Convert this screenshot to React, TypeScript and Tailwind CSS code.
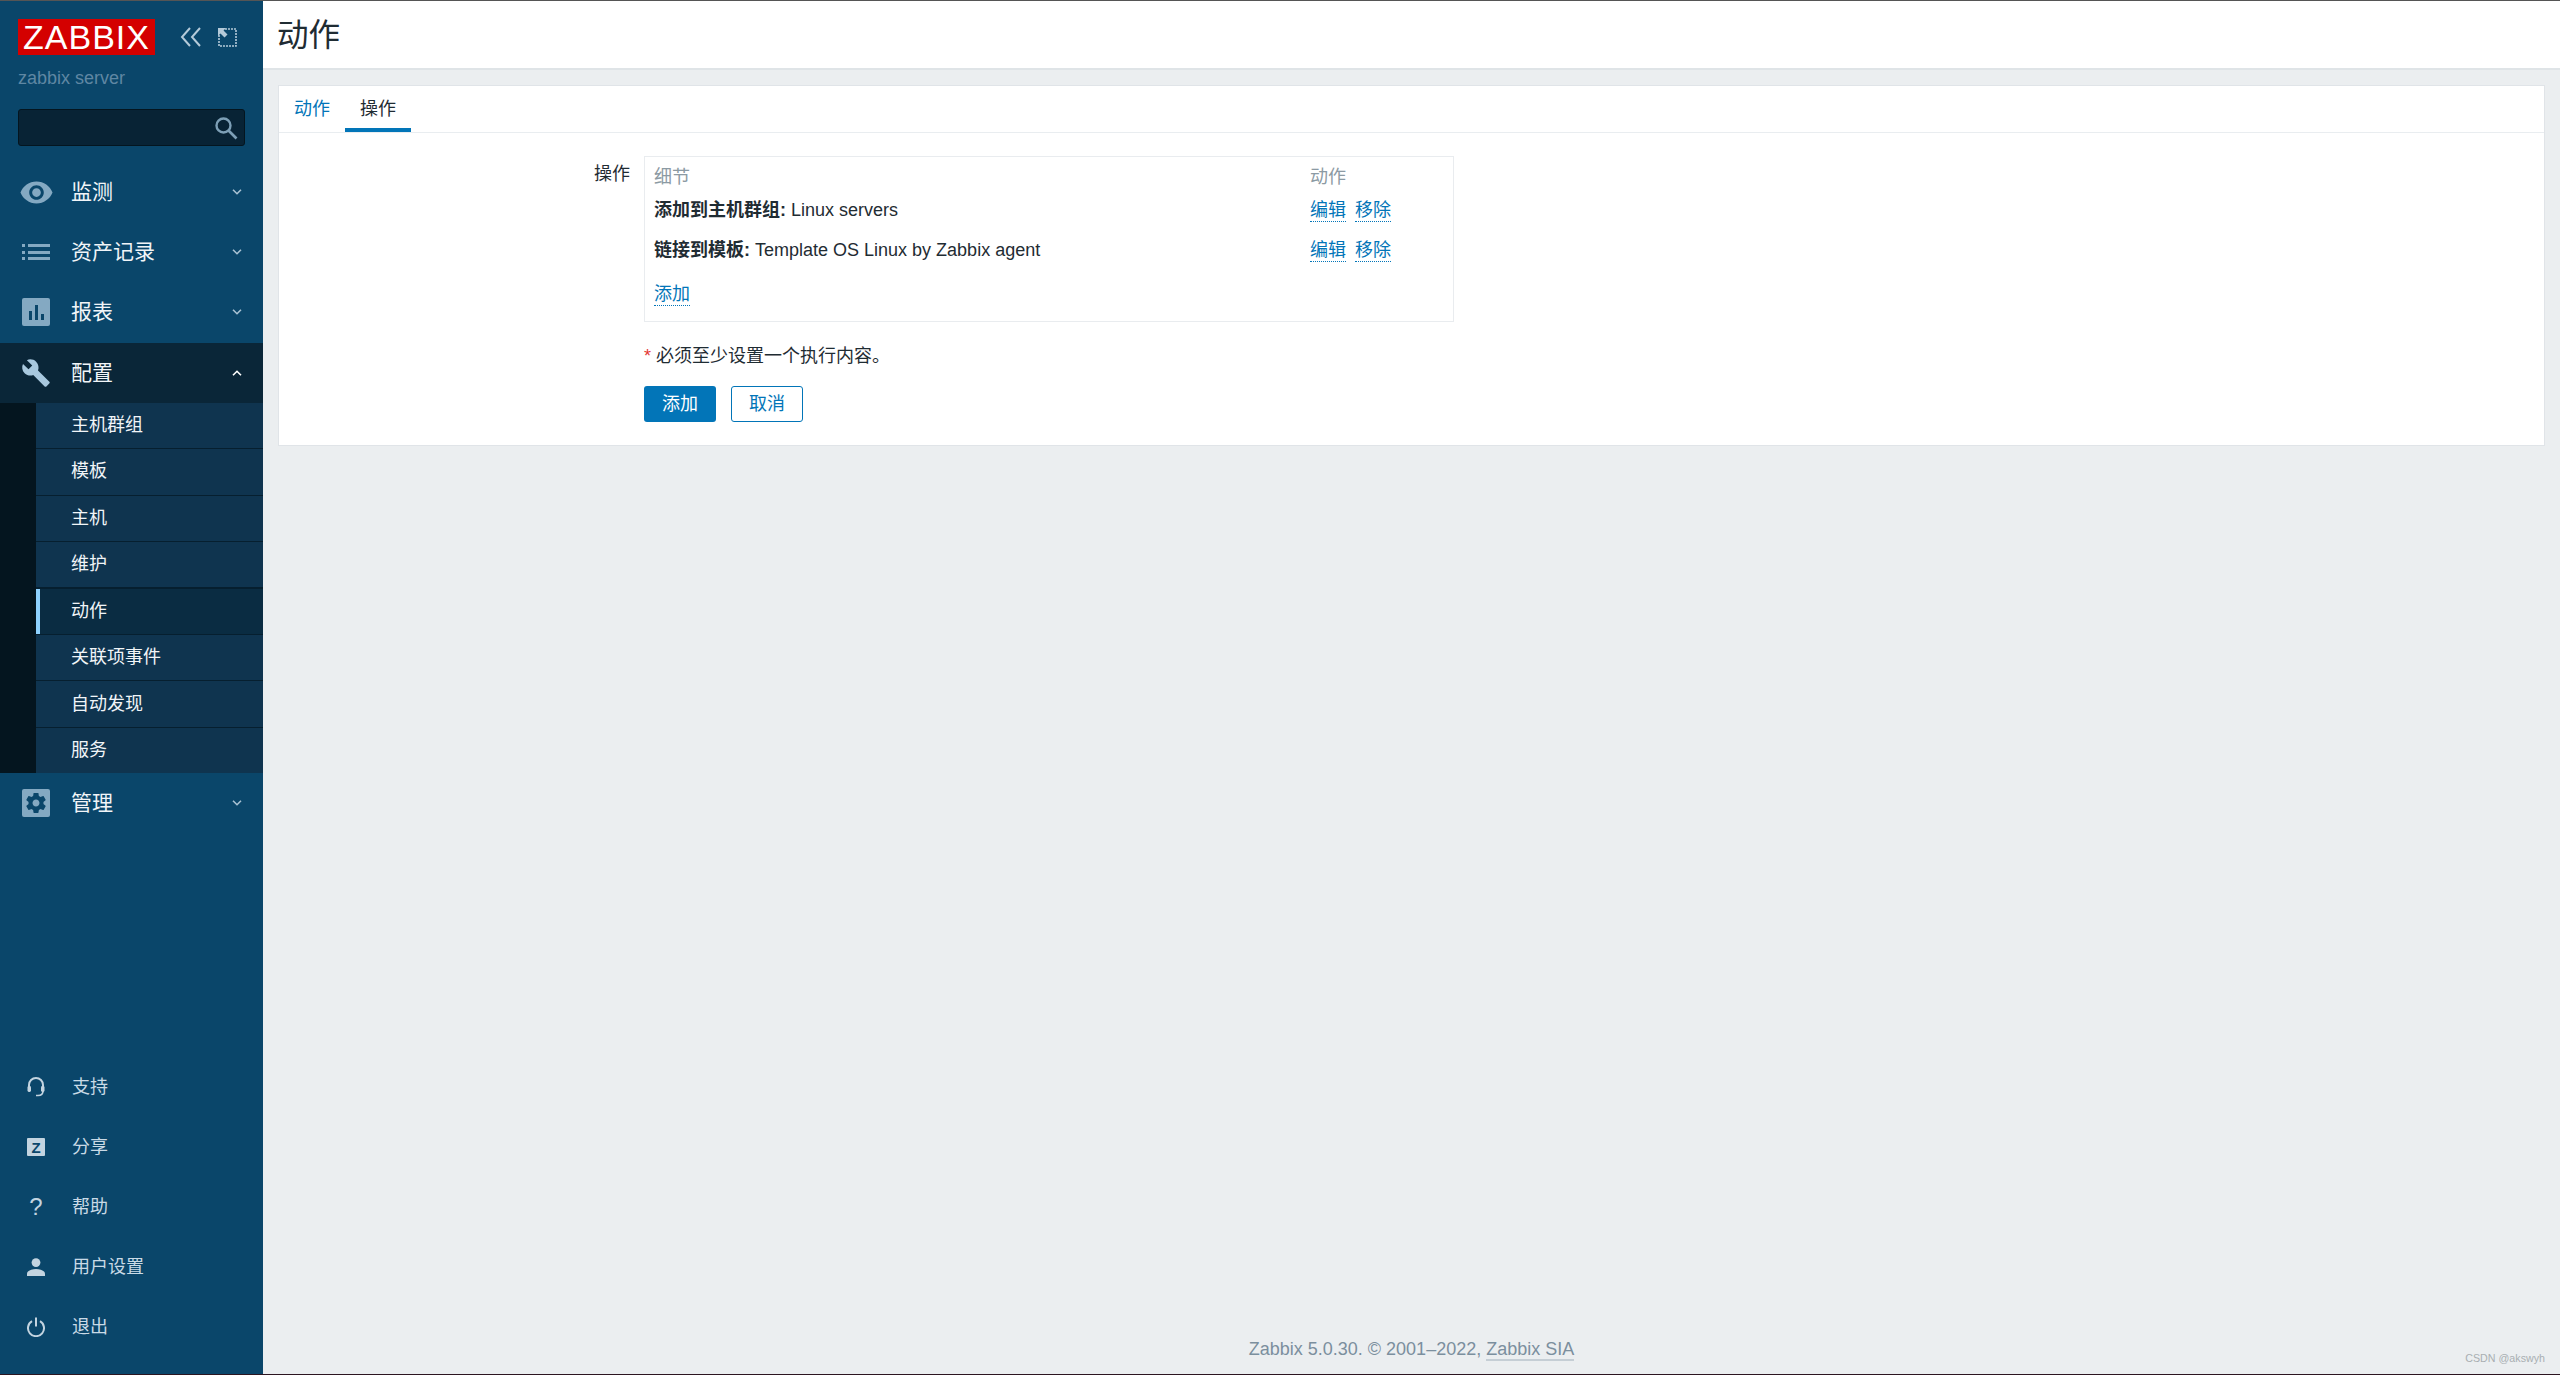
import type { ReactNode } from "react";

const cjk = "font-['Liberation_Sans','Noto_Sans_CJK_SC',sans-serif]";

function Chevron({ up }: { up?: boolean }) {
  return (
    <svg width="10" height="6" viewBox="0 0 10 6" fill="none" stroke={up ? "#ffffff" : "#a9c2d3"} strokeWidth="1.6">
      <path d={up ? "M1 5.3l4-4 4 4" : "M1 .7l4 4 4-4"} />
    </svg>
  );
}

function EyeIcon() {
  return (
    <svg width="35" height="35" viewBox="0 0 24 24" fill="#84a9c2">
      <path d="M12 4.5C7 4.5 2.73 7.61 1 12c1.73 4.39 6 7.5 11 7.5s9.27-3.11 11-7.5c-1.73-4.39-6-7.5-11-7.5zM12 17c-2.76 0-5-2.24-5-5s2.24-5 5-5 5 2.24 5 5-2.24 5-5 5zm0-8c-1.66 0-3 1.34-3 3s1.34 3 3 3 3-1.34 3-3-1.34-3-3-3z" />
    </svg>
  );
}

function ListIcon() {
  return (
    <svg width="28" height="20" viewBox="0 0 28 20" fill="#84a9c2">
      <rect x="0" y="2" width="3" height="3" />
      <rect x="0" y="9" width="3" height="3" />
      <rect x="0" y="15" width="3" height="3" />
      <rect x="6" y="2" width="22" height="3" />
      <rect x="6" y="9" width="22" height="3" />
      <rect x="6" y="15" width="22" height="3" />
    </svg>
  );
}

function ChartIcon() {
  return (
    <svg width="28" height="28" viewBox="0 0 28 28">
      <rect width="28" height="28" rx="2" fill="#84a9c2" />
      <rect x="7" y="13" width="3" height="9" fill="#0a466a" />
      <rect x="13" y="7" width="3" height="15" fill="#0a466a" />
      <rect x="19" y="16" width="3" height="6" fill="#0a466a" />
    </svg>
  );
}

function WrenchIcon() {
  return (
    <svg width="30" height="30" viewBox="0 0 24 24" fill="#a8c8de">
      <path d="M22.7 19l-9.1-9.1c.9-2.3.4-5-1.5-6.9-2-2-5-2.4-7.4-1.3L9 6 6 9 1.6 4.7C.4 7.1.9 10.1 2.9 12.1c1.9 1.9 4.6 2.4 6.9 1.5l9.1 9.1c.4.4 1 .4 1.4 0l2.3-2.3c.5-.4.5-1.1.1-1.4z" />
    </svg>
  );
}

function GearIcon() {
  return (
    <svg width="28" height="28" viewBox="0 0 28 28">
      <rect width="28" height="28" rx="2" fill="#84a9c2" />
      <g transform="translate(2 2)">
        <path
          fill="#0a466a"
          d="M19.43 12.98c.04-.32.07-.64.07-.98s-.03-.66-.07-.98l2.11-1.65c.19-.15.24-.42.12-.64l-2-3.46c-.12-.22-.39-.3-.61-.22l-2.49 1c-.52-.4-1.08-.73-1.69-.98l-.38-2.65C14.46 2.18 14.25 2 14 2h-4c-.25 0-.46.18-.49.42l-.38 2.65c-.61.25-1.17.59-1.69.98l-2.49-1c-.23-.09-.49 0-.61.22l-2 3.46c-.13.22-.07.49.12.64l2.11 1.65c-.04.32-.07.65-.07.98s.03.66.07.98l-2.11 1.65c-.19.15-.24.42-.12.64l2 3.46c.12.22.39.3.61.22l2.49-1c.52.4 1.08.73 1.69.98l.38 2.65c.03.24.24.42.49.42h4c.25 0 .46-.18.49-.42l.38-2.65c.61-.25 1.17-.59 1.69-.98l2.49 1c.23.09.49 0 .61-.22l2-3.46c.12-.22.07-.49-.12-.64l-2.11-1.65zM12 15.5c-1.93 0-3.5-1.57-3.5-3.5s1.57-3.5 3.5-3.5 3.5 1.57 3.5 3.5-1.57 3.5-3.5 3.5z"
        />
      </g>
    </svg>
  );
}

function HeadsetIcon() {
  return (
    <svg width="18" height="20" viewBox="0 0 18 20" fill="none" stroke="#c3d4e0">
      <path d="M2 11V8a7 7 0 0 1 14 0v3" strokeWidth="2" />
      <rect x="0.5" y="9" width="3.5" height="6" rx="1.4" fill="#c3d4e0" stroke="none" />
      <rect x="14" y="9" width="3.5" height="6" rx="1.4" fill="#c3d4e0" stroke="none" />
      <path d="M16 14c0 3-2 4.5-5 4.5H9" strokeWidth="1.6" />
    </svg>
  );
}

function UserIcon() {
  return (
    <svg width="18" height="18" viewBox="0 0 18 18" fill="#c3d4e0">
      <circle cx="9" cy="4.6" r="4.4" />
      <path d="M0 18v-2.2C0 12.6 5 11 9 11s9 1.6 9 4.8V18z" />
    </svg>
  );
}

function PowerIcon() {
  return (
    <svg width="18" height="20" viewBox="0 0 18 20" fill="none" stroke="#c3d4e0" strokeWidth="2">
      <path d="M9 0.5v9" />
      <path d="M5 4.2a8 8 0 1 0 8 0" />
    </svg>
  );
}

function MainItem({ icon, label, open }: { icon: ReactNode; label: string; open?: boolean }) {
  return (
    <div className="flex h-[60px] items-center pr-[21px] text-[21px] text-[#f1f5f8]">
      <div className="flex w-[71px] justify-center pl-[1px]">{icon}</div>
      <span className="flex-1">{label}</span>
      <Chevron up={open} />
    </div>
  );
}

function SubItem({ label, active }: { label: string; active?: boolean }) {
  return (
    <div
      className={
        active
          ? "flex flex-1 items-center border-l-4 border-l-[#8ed2ff] bg-[#0a2c42] pl-[31px]"
          : "flex flex-1 items-center bg-[#0f344f] pl-[35px]"
      }
    >
      {label}
    </div>
  );
}

function BottomItem({ icon, label }: { icon: ReactNode; label: string }) {
  return (
    <div className="flex h-[60px] items-center text-[18px] text-[#c9dae6]">
      <div className="flex w-[72px] justify-center">{icon}</div>
      <span>{label}</span>
    </div>
  );
}

function Sidebar() {
  return (
    <aside className="flex w-[263px] shrink-0 flex-col bg-[#0a466a]">
      <div className="flex h-[161px] flex-col px-[18px] pt-[18px]">
        <div className="flex items-center">
          <div className="flex h-[36px] w-[137px] items-center justify-center bg-[#d40000] text-[34px] leading-none tracking-[1px] text-white">
            ZABBIX
          </div>
          <svg className="ml-[25px]" width="22" height="20" viewBox="0 0 22 20" fill="none" stroke="#b4cad9" strokeWidth="2">
            <path d="M10 1L2 10l8 9M20 1l-8 9 8 9" />
          </svg>
          <svg className="ml-[16px]" width="19" height="19" viewBox="0 0 19 19" fill="none">
            <path d="M7 1h11v17H1V7" stroke="#b4cad9" strokeWidth="1.6" strokeDasharray="2 1" />
            <path d="M0 0h8L5.5 2.5 9.5 6.5 6.5 9.5 2.5 5.5 0 8z" fill="#b4cad9" />
          </svg>
        </div>
        <div className="mt-[13px] text-[18px] leading-[21px] text-[#5f87a3]">zabbix server</div>
        <div className="mt-[20px] flex h-[37px] w-[227px] items-center justify-end rounded-[3px] border border-[#04151f] bg-[#082335] pr-[6px]">
          <svg width="24" height="24" viewBox="0 0 24 24" fill="none" stroke="#7d9fb6">
            <circle cx="9.5" cy="9.5" r="7" strokeWidth="2.4" />
            <path d="M14.5 14.5l8 8" strokeWidth="2.6" />
          </svg>
        </div>
      </div>

      <MainItem icon={<EyeIcon />} label="监测" />
      <MainItem icon={<ListIcon />} label="资产记录" />
      <MainItem icon={<ChartIcon />} label="报表" />
      <div className="mt-px bg-[#0a2638]">
        <MainItem icon={<WrenchIcon />} label="配置" open />
        <div className="bg-[#04151f] pl-9">
          <div className="flex h-[370px] flex-col gap-[1.25px] bg-[#061f2f] text-[18px] text-[#f1f5f8]">
            <SubItem label="主机群组" />
            <SubItem label="模板" />
            <SubItem label="主机" />
            <SubItem label="维护" />
            <SubItem label="动作" active />
            <SubItem label="关联项事件" />
            <SubItem label="自动发现" />
            <SubItem label="服务" />
          </div>
        </div>
      </div>
      <MainItem icon={<GearIcon />} label="管理" />

      <div className="mt-auto pb-[17px]">
        <BottomItem icon={<HeadsetIcon />} label="支持" />
        <BottomItem
          icon={
            <div className="flex h-[18px] w-[18px] items-center justify-center rounded-[1px] bg-[#c3d4e0] text-[15px] leading-none font-bold text-[#0a466a]">
              Z
            </div>
          }
          label="分享"
        />
        <BottomItem icon={<span className="text-[24px] leading-none text-[#c3d4e0]">?</span>} label="帮助" />
        <BottomItem icon={<UserIcon />} label="用户设置" />
        <BottomItem icon={<PowerIcon />} label="退出" />
      </div>
    </aside>
  );
}

function DottedLink({ children }: { children: ReactNode }) {
  return (
    <a className="inline-block border-b-[1px] border-dotted border-[#0275b8] leading-[22px] text-[#0275b8]">{children}</a>
  );
}

function OperationRow({ title, value }: { title: string; value: string }) {
  return (
    <div className="grid h-[40px] grid-cols-[656px_1fr] leading-[30px]">
      <div>
        <b className="font-bold">{title}:</b> {value}
      </div>
      <div className="flex items-start gap-[9px] pt-[4px]">
        <DottedLink>编辑</DottedLink>
        <DottedLink>移除</DottedLink>
      </div>
    </div>
  );
}

function ActionCard() {
  return (
    <div className="mx-[15px] mt-[15px] border border-[#e0e4e8] bg-white pb-[23px]">
      <div className="flex h-[47px] border-b border-[#e9edf0] pl-[15px]">
        <div className="flex items-center pr-[15px] text-[#0275b8]">动作</div>
        <div className="flex w-[66px] items-center justify-center border-b-4 border-[#0275b8] pt-[4px] text-[#1f2c33]">操作</div>
      </div>
      <div className="mt-[23px] grid grid-cols-[351px_1fr] gap-x-[14px]">
        <div className="pt-[8px] text-right leading-[21px] text-[#1f2c33]">操作</div>
        <div>
          <div className="h-[166px] w-[810px] border border-[#e9ecef] pl-[9px] text-[#1f2c33]">
            <div className="grid h-[38px] grid-cols-[656px_1fr] items-center pt-[3px] text-[#8c9aa3]">
              <span>细节</span>
              <span>动作</span>
            </div>
            <OperationRow title="添加到主机群组" value="Linux servers" />
            <OperationRow title="链接到模板" value="Template OS Linux by Zabbix agent" />
            <div className="pt-[6px]">
              <DottedLink>添加</DottedLink>
            </div>
          </div>
          <div className="mt-[24px] flex h-[21px] items-center text-[#1f2c33]">
            <span className="mr-[5px] text-[#e33734]">*</span>
            必须至少设置一个执行内容。
          </div>
          <div className="mt-[19px] flex gap-[15px]">
            <button className="h-[36px] w-[72px] rounded-[3px] bg-[#0275b8] text-[18px] text-white">添加</button>
            <button className="h-[36px] w-[72px] rounded-[3px] border border-[#0275b8] bg-white text-[18px] text-[#0275b8]">取消</button>
          </div>
        </div>
      </div>
    </div>
  );
}

export default function App() {
  return (
    <div className={`relative flex h-screen flex-col overflow-hidden bg-[#ebeef0] text-[18px] ${cjk}`}>
      <div className="h-px shrink-0 bg-[#555555]" />
      <div className="flex min-h-0 flex-1">
        <Sidebar />
        <main className="flex min-w-0 flex-1 flex-col">
          <header className="flex h-[69px] shrink-0 items-center border-b-2 border-[#dfe4e7] bg-white pt-[2px] pl-[14px] text-[31.5px] text-[#1f2c33]">
            动作
          </header>
          <ActionCard />
          <footer className="mt-auto pb-[14px] text-center leading-[21px] text-[#7b8f9e]">
            Zabbix 5.0.30. © 2001–2022, <a className="border-b-2 border-[#c5ced5]">Zabbix SIA</a>
          </footer>
        </main>
      </div>
      <div className="h-px shrink-0 bg-[#2b1520]" />
      <div className="absolute right-[15px] bottom-[10px] text-[10.7px] leading-[14px] text-[#a9aeb2]">CSDN @akswyh</div>
    </div>
  );
}
